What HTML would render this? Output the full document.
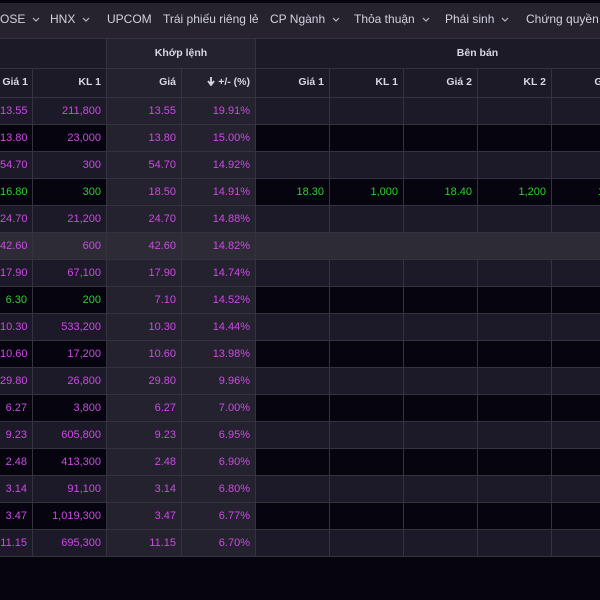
<!DOCTYPE html>
<html><head><meta charset="utf-8"><style>
*{box-sizing:border-box;margin:0;padding:0}
body{width:600px;height:600px;overflow:hidden;background:#06040e;font-family:"Liberation Sans",sans-serif;position:relative}
.top{position:absolute;left:0;top:0;width:600px;height:3px;background:#06040e}
.nav{position:absolute;left:0;top:3px;width:600px;height:35px;background:#26232f;color:#d2d0da;font-size:12px;white-space:nowrap}
.nav span{position:absolute;top:9px}
.nav svg{margin-left:7px;vertical-align:middle}
.tbl{position:absolute;left:0;top:38px;width:700px}
.r{display:flex;height:27px;border-bottom:1px solid #34323d}
.r div{flex:none;height:100%;border-right:1px solid #34323d;text-align:right;padding-right:5px;font-size:11px;line-height:26px;color:#cc4ae4;white-space:nowrap;overflow:hidden}
.w1{width:33px}.w2{width:74px}.w3{width:75px}.w4{width:74px}
.L{background:#1c1a28}.D{background:#06040e}.H{background:#2d2b35}
.L .k,.D .k{background:#24222e}
.g{color:#2fcf2f!important}
.hd div{color:#d8d6e0!important;background:#1c1a27;font-weight:bold;font-size:10.5px}
.hd .k{background:#24222e}
</style></head><body>
<div class="top"></div>
<div class="nav">
<span style="left:0">OSE<svg width="8" height="5" viewBox="0 0 8 5"><path d="M1 1l3 3 3-3" stroke="#b8b6c0" fill="none" stroke-width="1.2"/></svg></span>
<span style="left:50px">HNX<svg width="8" height="5" viewBox="0 0 8 5"><path d="M1 1l3 3 3-3" stroke="#b8b6c0" fill="none" stroke-width="1.2"/></svg></span>
<span style="left:107px">UPCOM</span>
<span style="left:163px">Trái phiếu riêng lẻ</span>
<span style="left:270px">CP Ngành<svg width="8" height="5" viewBox="0 0 8 5"><path d="M1 1l3 3 3-3" stroke="#b8b6c0" fill="none" stroke-width="1.2"/></svg></span>
<span style="left:354px">Thỏa thuận<svg width="8" height="5" viewBox="0 0 8 5"><path d="M1 1l3 3 3-3" stroke="#b8b6c0" fill="none" stroke-width="1.2"/></svg></span>
<span style="left:445px">Phái sinh<svg width="8" height="5" viewBox="0 0 8 5"><path d="M1 1l3 3 3-3" stroke="#b8b6c0" fill="none" stroke-width="1.2"/></svg></span>
<span style="left:526px">Chứng quyền</span>
</div>
<div class="tbl">
<div class="r hd" style="height:31px;border-top:1px solid #34323d"><div style="width:107px"></div><div class="k" style="width:149px;text-align:center;padding:0;line-height:29px">Khớp lệnh</div><div style="width:444px;text-align:center;padding:0;line-height:29px">Bên bán</div></div>
<div class="r hd" style="height:29px"><div class="w1" style="padding-right:4px">Giá 1</div><div class="w2">KL 1</div><div class="w3 k">Giá</div><div class="w4 k"><svg width="8" height="9" viewBox="0 0 8 9" style="vertical-align:-1px;margin-right:3px"><path d="M4 0v7M1 4l3 4 3-4" stroke="#d8d6e0" fill="none" stroke-width="1.8"/></svg>+/- (%)</div><div class="w2">Giá 1</div><div class="w2">KL 1</div><div class="w2">Giá 2</div><div class="w2">KL 2</div><div class="w2">Giá 3</div></div>

<div class="r L"><div class="w1">13.55</div><div class="w2">211,800</div><div class="w3 k">13.55</div><div class="w4 k">19.91%</div><div class="w2"></div><div class="w2"></div><div class="w2"></div><div class="w2"></div><div class="w2"></div></div>
<div class="r D"><div class="w1">13.80</div><div class="w2">23,000</div><div class="w3 k">13.80</div><div class="w4 k">15.00%</div><div class="w2"></div><div class="w2"></div><div class="w2"></div><div class="w2"></div><div class="w2"></div></div>
<div class="r L"><div class="w1">54.70</div><div class="w2">300</div><div class="w3 k">54.70</div><div class="w4 k">14.92%</div><div class="w2"></div><div class="w2"></div><div class="w2"></div><div class="w2"></div><div class="w2"></div></div>
<div class="r D"><div class="w1 g">16.80</div><div class="w2 g">300</div><div class="w3 k">18.50</div><div class="w4 k">14.91%</div><div class="w2 g">18.30</div><div class="w2 g">1,000</div><div class="w2 g">18.40</div><div class="w2 g">1,200</div><div class="w2 g" style="text-align:left;padding-left:46px">18.50</div></div>
<div class="r L"><div class="w1">24.70</div><div class="w2">21,200</div><div class="w3 k">24.70</div><div class="w4 k">14.88%</div><div class="w2"></div><div class="w2"></div><div class="w2"></div><div class="w2"></div><div class="w2"></div></div>
<div class="r H"><div class="w1">42.60</div><div class="w2">600</div><div class="w3">42.60</div><div class="w4">14.82%</div><div class="w2" style="border-color:#2d2b35"></div><div class="w2" style="border-color:#2d2b35"></div><div class="w2" style="border-color:#2d2b35"></div><div class="w2" style="border-color:#2d2b35"></div><div class="w2"></div></div>
<div class="r L"><div class="w1">17.90</div><div class="w2">67,100</div><div class="w3 k">17.90</div><div class="w4 k">14.74%</div><div class="w2"></div><div class="w2"></div><div class="w2"></div><div class="w2"></div><div class="w2"></div></div>
<div class="r D"><div class="w1 g">6.30</div><div class="w2 g">200</div><div class="w3 k">7.10</div><div class="w4 k">14.52%</div><div class="w2"></div><div class="w2"></div><div class="w2"></div><div class="w2"></div><div class="w2"></div></div>
<div class="r L"><div class="w1">10.30</div><div class="w2">533,200</div><div class="w3 k">10.30</div><div class="w4 k">14.44%</div><div class="w2"></div><div class="w2"></div><div class="w2"></div><div class="w2"></div><div class="w2"></div></div>
<div class="r D"><div class="w1">10.60</div><div class="w2">17,200</div><div class="w3 k">10.60</div><div class="w4 k">13.98%</div><div class="w2"></div><div class="w2"></div><div class="w2"></div><div class="w2"></div><div class="w2"></div></div>
<div class="r L"><div class="w1">29.80</div><div class="w2">26,800</div><div class="w3 k">29.80</div><div class="w4 k">9.96%</div><div class="w2"></div><div class="w2"></div><div class="w2"></div><div class="w2"></div><div class="w2"></div></div>
<div class="r D"><div class="w1">6.27</div><div class="w2">3,800</div><div class="w3 k">6.27</div><div class="w4 k">7.00%</div><div class="w2"></div><div class="w2"></div><div class="w2"></div><div class="w2"></div><div class="w2"></div></div>
<div class="r L"><div class="w1">9.23</div><div class="w2">605,800</div><div class="w3 k">9.23</div><div class="w4 k">6.95%</div><div class="w2"></div><div class="w2"></div><div class="w2"></div><div class="w2"></div><div class="w2"></div></div>
<div class="r D"><div class="w1">2.48</div><div class="w2">413,300</div><div class="w3 k">2.48</div><div class="w4 k">6.90%</div><div class="w2"></div><div class="w2"></div><div class="w2"></div><div class="w2"></div><div class="w2"></div></div>
<div class="r L"><div class="w1">3.14</div><div class="w2">91,100</div><div class="w3 k">3.14</div><div class="w4 k">6.80%</div><div class="w2"></div><div class="w2"></div><div class="w2"></div><div class="w2"></div><div class="w2"></div></div>
<div class="r D"><div class="w1">3.47</div><div class="w2">1,019,300</div><div class="w3 k">3.47</div><div class="w4 k">6.77%</div><div class="w2"></div><div class="w2"></div><div class="w2"></div><div class="w2"></div><div class="w2"></div></div>
<div class="r L"><div class="w1">11.15</div><div class="w2">695,300</div><div class="w3 k">11.15</div><div class="w4 k">6.70%</div><div class="w2"></div><div class="w2"></div><div class="w2"></div><div class="w2"></div><div class="w2"></div></div>
</div>
</body></html>
